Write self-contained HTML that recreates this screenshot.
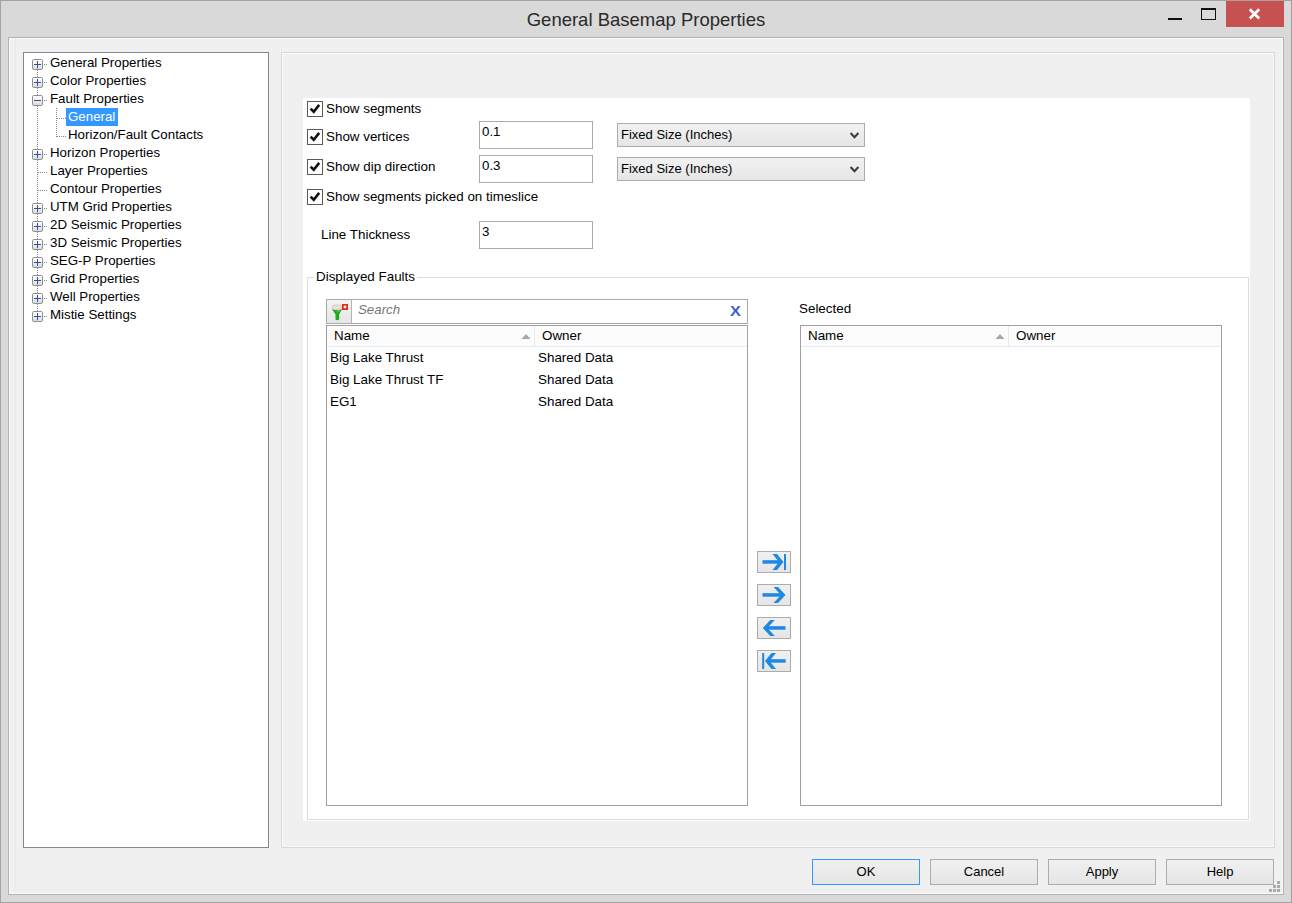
<!DOCTYPE html>
<html><head><meta charset="utf-8">
<style>
*{box-sizing:border-box;margin:0;padding:0}
html,body{width:1292px;height:903px;overflow:hidden;background:#d9d9d9}
body{position:relative;font-family:"Liberation Sans",sans-serif;color:#000}
.a{position:absolute}
.t{position:absolute;white-space:pre;line-height:1}
#frame{left:0;top:0;width:1292px;height:903px;border:1px solid #a3a3a3;background:#d9d9d9}
#title{left:0;top:11px;width:1292px;text-align:center;font-size:18.5px;color:#2a2a2a}
#close{left:1226px;top:1px;width:58px;height:26px;background:#c75050}
#client{left:8px;top:37px;width:1276px;height:858px;border:1px solid #b2b2b2;background:#f0f0f0;box-shadow:inset 1px 1px 0 #fafafa,inset -1px -1px 0 #fafafa}
#tree{left:23px;top:52px;width:246px;height:796px;border:1px solid #828790;background:#fff}
#rpanel{left:281px;top:52px;width:994px;height:796px;border:1px solid #d7d7d7;background:#f0f0f0;box-shadow:inset 1px 1px 0 #fbfbfb,inset -1px -1px 0 #f6f6f6}
#white{left:303px;top:98px;width:947px;height:723px;background:#fff}
.cb{position:absolute;width:16px;height:16px;border:1px solid #5a5a5a;background:#fff}
.lbl{font-size:13.4px}
.inp{position:absolute;width:114px;height:28px;border:1px solid #ababab;background:#fff}
.sel{position:absolute;width:248px;height:24px;border:1px solid #acacac;background:linear-gradient(#f2f2f2,#e5e5e5)}
.btn{position:absolute;width:108px;height:26px;border:1px solid #acacac;background:linear-gradient(#f0f0f0,#e5e5e5);font-size:13px;text-align:center;line-height:23px}
.abtn{position:absolute;left:757px;width:34px;height:22px;border:1px solid #acacac;background:linear-gradient(#f0f0f0,#e5e5e5)}
.list{position:absolute;border:1px solid #a0a0a0;background:#fff}
.row{font-size:13.4px}
.tr{font-size:13.3px}
</style></head><body>
<div id="frame" class="a"></div>
<div id="title" class="t">General Basemap Properties</div>
<div id="close" class="a"></div>
<div class="a" style="left:1168px;top:18px;width:14px;height:2px;background:#111"></div>
<div class="a" style="left:1201px;top:8px;width:15px;height:12px;border:1px solid #111;border-top-width:2px"></div>
<svg class="a" style="left:1226px;top:1px" width="58" height="26"><path d="M23.8 8.2 L33.2 17.4 M33.2 8.2 L23.8 17.4" stroke="#fff" stroke-width="2.8"/></svg>
<div id="client" class="a"></div>
<div class="a" style="left:15px;top:38px;width:1px;height:852px;background:#e9e9e9"></div>
<div class="a" style="left:15px;top:889px;width:1268px;height:1px;background:#e9e9e9"></div>
<div class="a" style="left:299px;top:53px;width:1px;height:770px;background:#ebebeb"></div>
<div id="tree" class="a"></div>
<div id="rpanel" class="a"></div>
<div id="white" class="a"></div>
<!-- tree -->
<svg class="a" style="left:0;top:0" width="280" height="340" shape-rendering="crispEdges">
<defs><linearGradient id="eg" x1="0" y1="0" x2="0" y2="1"><stop offset="0" stop-color="#ffffff"/><stop offset="0.5" stop-color="#f0f0f0"/><stop offset="1" stop-color="#d6d6d6"/></linearGradient></defs>
<line x1="37.5" y1="64" x2="37.5" y2="316" stroke="#8a8a8a" stroke-dasharray="1 1"/>
<line x1="56.5" y1="108" x2="56.5" y2="137" stroke="#8a8a8a" stroke-dasharray="1 1"/>
<line x1="38" y1="64.5" x2="48" y2="64.5" stroke="#8a8a8a" stroke-dasharray="1 1"/>
<rect x="32.5" y="59.5" width="10" height="10" rx="1.2" fill="url(#eg)" stroke="#8f8f8f" shape-rendering="geometricPrecision"/>
<rect x="34" y="64" width="7" height="1" fill="#2f4f9f"/>
<rect x="37" y="61" width="1" height="7" fill="#2f4f9f"/>
<line x1="38" y1="82.5" x2="48" y2="82.5" stroke="#8a8a8a" stroke-dasharray="1 1"/>
<rect x="32.5" y="77.5" width="10" height="10" rx="1.2" fill="url(#eg)" stroke="#8f8f8f" shape-rendering="geometricPrecision"/>
<rect x="34" y="82" width="7" height="1" fill="#2f4f9f"/>
<rect x="37" y="79" width="1" height="7" fill="#2f4f9f"/>
<line x1="38" y1="100.5" x2="48" y2="100.5" stroke="#8a8a8a" stroke-dasharray="1 1"/>
<rect x="32.5" y="95.5" width="10" height="10" rx="1.2" fill="url(#eg)" stroke="#8f8f8f" shape-rendering="geometricPrecision"/>
<rect x="34" y="100" width="7" height="1" fill="#2f4f9f"/>
<line x1="57" y1="118.5" x2="66" y2="118.5" stroke="#8a8a8a" stroke-dasharray="1 1"/>
<rect x="66" y="108" width="52" height="18" fill="#3399ff"/>
<line x1="57" y1="136.5" x2="66" y2="136.5" stroke="#8a8a8a" stroke-dasharray="1 1"/>
<line x1="38" y1="154.5" x2="48" y2="154.5" stroke="#8a8a8a" stroke-dasharray="1 1"/>
<rect x="32.5" y="149.5" width="10" height="10" rx="1.2" fill="url(#eg)" stroke="#8f8f8f" shape-rendering="geometricPrecision"/>
<rect x="34" y="154" width="7" height="1" fill="#2f4f9f"/>
<rect x="37" y="151" width="1" height="7" fill="#2f4f9f"/>
<line x1="38" y1="172.5" x2="48" y2="172.5" stroke="#8a8a8a" stroke-dasharray="1 1"/>
<line x1="38" y1="190.5" x2="48" y2="190.5" stroke="#8a8a8a" stroke-dasharray="1 1"/>
<line x1="38" y1="208.5" x2="48" y2="208.5" stroke="#8a8a8a" stroke-dasharray="1 1"/>
<rect x="32.5" y="203.5" width="10" height="10" rx="1.2" fill="url(#eg)" stroke="#8f8f8f" shape-rendering="geometricPrecision"/>
<rect x="34" y="208" width="7" height="1" fill="#2f4f9f"/>
<rect x="37" y="205" width="1" height="7" fill="#2f4f9f"/>
<line x1="38" y1="226.5" x2="48" y2="226.5" stroke="#8a8a8a" stroke-dasharray="1 1"/>
<rect x="32.5" y="221.5" width="10" height="10" rx="1.2" fill="url(#eg)" stroke="#8f8f8f" shape-rendering="geometricPrecision"/>
<rect x="34" y="226" width="7" height="1" fill="#2f4f9f"/>
<rect x="37" y="223" width="1" height="7" fill="#2f4f9f"/>
<line x1="38" y1="244.5" x2="48" y2="244.5" stroke="#8a8a8a" stroke-dasharray="1 1"/>
<rect x="32.5" y="239.5" width="10" height="10" rx="1.2" fill="url(#eg)" stroke="#8f8f8f" shape-rendering="geometricPrecision"/>
<rect x="34" y="244" width="7" height="1" fill="#2f4f9f"/>
<rect x="37" y="241" width="1" height="7" fill="#2f4f9f"/>
<line x1="38" y1="262.5" x2="48" y2="262.5" stroke="#8a8a8a" stroke-dasharray="1 1"/>
<rect x="32.5" y="257.5" width="10" height="10" rx="1.2" fill="url(#eg)" stroke="#8f8f8f" shape-rendering="geometricPrecision"/>
<rect x="34" y="262" width="7" height="1" fill="#2f4f9f"/>
<rect x="37" y="259" width="1" height="7" fill="#2f4f9f"/>
<line x1="38" y1="280.5" x2="48" y2="280.5" stroke="#8a8a8a" stroke-dasharray="1 1"/>
<rect x="32.5" y="275.5" width="10" height="10" rx="1.2" fill="url(#eg)" stroke="#8f8f8f" shape-rendering="geometricPrecision"/>
<rect x="34" y="280" width="7" height="1" fill="#2f4f9f"/>
<rect x="37" y="277" width="1" height="7" fill="#2f4f9f"/>
<line x1="38" y1="298.5" x2="48" y2="298.5" stroke="#8a8a8a" stroke-dasharray="1 1"/>
<rect x="32.5" y="293.5" width="10" height="10" rx="1.2" fill="url(#eg)" stroke="#8f8f8f" shape-rendering="geometricPrecision"/>
<rect x="34" y="298" width="7" height="1" fill="#2f4f9f"/>
<rect x="37" y="295" width="1" height="7" fill="#2f4f9f"/>
<line x1="38" y1="316.5" x2="48" y2="316.5" stroke="#8a8a8a" stroke-dasharray="1 1"/>
<rect x="32.5" y="311.5" width="10" height="10" rx="1.2" fill="url(#eg)" stroke="#8f8f8f" shape-rendering="geometricPrecision"/>
<rect x="34" y="316" width="7" height="1" fill="#2f4f9f"/>
<rect x="37" y="313" width="1" height="7" fill="#2f4f9f"/>
</svg>
<div class="t tr" style="left:50px;top:56px">General Properties</div>
<div class="t tr" style="left:50px;top:74px">Color Properties</div>
<div class="t tr" style="left:50px;top:92px">Fault Properties</div>
<div class="t tr" style="left:68px;top:110px;color:#fff">General</div>
<div class="t tr" style="left:68px;top:128px">Horizon/Fault Contacts</div>
<div class="t tr" style="left:50px;top:146px">Horizon Properties</div>
<div class="t tr" style="left:50px;top:164px">Layer Properties</div>
<div class="t tr" style="left:50px;top:182px">Contour Properties</div>
<div class="t tr" style="left:50px;top:200px">UTM Grid Properties</div>
<div class="t tr" style="left:50px;top:218px">2D Seismic Properties</div>
<div class="t tr" style="left:50px;top:236px">3D Seismic Properties</div>
<div class="t tr" style="left:50px;top:254px">SEG-P Properties</div>
<div class="t tr" style="left:50px;top:272px">Grid Properties</div>
<div class="t tr" style="left:50px;top:290px">Well Properties</div>
<div class="t tr" style="left:50px;top:308px">Mistie Settings</div>

<!-- checkboxes -->
<div class="cb" style="left:307px;top:101px"><svg width="16" height="16" style="position:absolute;left:-1px;top:-1px"><path d="M3.6 7.6 L6.7 10.7 L12.2 3.9" fill="none" stroke="#111" stroke-width="2.6"/></svg></div>
<div class="t lbl" style="left:326px;top:102px">Show segments</div>
<div class="cb" style="left:307px;top:129px"><svg width="16" height="16" style="position:absolute;left:-1px;top:-1px"><path d="M3.6 7.6 L6.7 10.7 L12.2 3.9" fill="none" stroke="#111" stroke-width="2.6"/></svg></div>
<div class="t lbl" style="left:326px;top:130px">Show vertices</div>
<div class="cb" style="left:307px;top:159px"><svg width="16" height="16" style="position:absolute;left:-1px;top:-1px"><path d="M3.6 7.6 L6.7 10.7 L12.2 3.9" fill="none" stroke="#111" stroke-width="2.6"/></svg></div>
<div class="t lbl" style="left:326px;top:160px">Show dip direction</div>
<div class="cb" style="left:307px;top:189px"><svg width="16" height="16" style="position:absolute;left:-1px;top:-1px"><path d="M3.6 7.6 L6.7 10.7 L12.2 3.9" fill="none" stroke="#111" stroke-width="2.6"/></svg></div>
<div class="t lbl" style="left:326px;top:190px">Show segments picked on timeslice</div>
<div class="t lbl" style="left:321px;top:228px">Line Thickness</div>

<div class="inp" style="left:479px;top:121px"></div>
<div class="t tr" style="left:482px;top:125px">0.1</div>
<div class="inp" style="left:479px;top:155px"></div>
<div class="t tr" style="left:482px;top:159px">0.3</div>
<div class="inp" style="left:479px;top:221px"></div>
<div class="t tr" style="left:482px;top:225px">3</div>
<div class="sel" style="left:617px;top:123px"><svg width="12" height="10" style="position:absolute;left:231px;top:6px"><path d="M1.6 3 L5.5 7.2 L9.4 3" fill="none" stroke="#3c3c3c" stroke-width="2.1"/></svg></div>
<div class="t" style="left:621px;top:128px;font-size:13px">Fixed Size (Inches)</div>
<div class="sel" style="left:617px;top:157px"><svg width="12" height="10" style="position:absolute;left:231px;top:6px"><path d="M1.6 3 L5.5 7.2 L9.4 3" fill="none" stroke="#3c3c3c" stroke-width="2.1"/></svg></div>
<div class="t" style="left:621px;top:162px;font-size:13px">Fixed Size (Inches)</div>

<!-- group box -->
<div class="a" style="left:307px;top:277px;width:942px;height:543px;border:1px solid #dcdcdc"></div>
<div class="t lbl" style="left:314px;top:270px;background:#fff;padding:0 2px">Displayed Faults</div>
<!-- search -->
<div class="a" style="left:326px;top:299px;width:422px;height:25px;border:1px solid #a9a9a9;background:#fff"></div>
<div class="a" style="left:327px;top:300px;width:25px;height:23px;background:linear-gradient(#f4f4f4,#e6e6e6);border-right:1px solid #b4b4b4"></div>
<svg class="a" style="left:326px;top:299px" width="26" height="25">
<ellipse cx="10.8" cy="8.2" rx="4.6" ry="2.2" fill="#d8eed8" stroke="#f2a0a0" stroke-width="0.7"/>
<path d="M5.8 10 Q11 12.6 16.2 10 L13.2 15.2 L13.2 20.5 Q11.3 22 9.5 20.5 L9.5 15.2 Z" fill="#20a820"/>
<path d="M11.5 13 L13.5 11.5" stroke="#9ad89a" stroke-width="1"/>
<rect x="16" y="5" width="6" height="6" fill="#e62a18"/>
<circle cx="19" cy="8" r="1.4" fill="#fff"/>
</svg>
<div class="t" style="left:358px;top:303px;font-size:13.3px;font-style:italic;color:#777">Search</div>
<div class="t" style="left:730px;top:304px;font-size:14.5px;font-weight:bold;color:#3a5fd8;transform:scaleX(1.12);transform-origin:0 0">X</div>
<div class="list" style="left:326px;top:325px;width:422px;height:481px"></div>
<div class="a" style="left:327px;top:326px;width:420px;height:21px;background:#fcfcfc;border-bottom:1px solid #e3ebf6"></div>
<div class="a" style="left:534px;top:326px;width:1px;height:20px;background:#e8eaee"></div>
<svg class="a" style="left:521px;top:333px" width="11" height="7"><path d="M0.5 6 L5 1 L9.5 6 Z" fill="#a8a8a8"/></svg>
<div class="t row" style="left:334px;top:329px">Name</div>
<div class="t row" style="left:542px;top:329px">Owner</div>
<div class="t row" style="left:330px;top:351px">Big Lake Thrust</div>
<div class="t row" style="left:538px;top:351px">Shared Data</div>
<div class="t row" style="left:330px;top:373px">Big Lake Thrust TF</div>
<div class="t row" style="left:538px;top:373px">Shared Data</div>
<div class="t row" style="left:330px;top:395px">EG1</div>
<div class="t row" style="left:538px;top:395px">Shared Data</div>
<div class="t row" style="left:799px;top:302px">Selected</div>
<div class="list" style="left:800px;top:325px;width:422px;height:481px"></div>
<div class="a" style="left:801px;top:326px;width:420px;height:21px;background:#fcfcfc;border-bottom:1px solid #e3ebf6"></div>
<div class="a" style="left:1008px;top:326px;width:1px;height:20px;background:#e8eaee"></div>
<svg class="a" style="left:995px;top:333px" width="11" height="7"><path d="M0.5 6 L5 1 L9.5 6 Z" fill="#a8a8a8"/></svg>
<div class="t row" style="left:808px;top:329px">Name</div>
<div class="t row" style="left:1016px;top:329px">Owner</div>

<div class="abtn" style="top:551px"><svg width="34" height="22" style="position:absolute;left:-1px;top:-1px"><rect x="5.5" y="9.2" width="19" height="3.5" fill="#1e88e5"/><path d="M15.5 3 L20 3 L26.5 11 L20 19 L15.5 19 L22 11 Z" fill="#1e88e5"/><rect x="27" y="3" width="2" height="16" fill="#1e88e5"/></svg></div>
<div class="abtn" style="top:584px"><svg width="34" height="22" style="position:absolute;left:-1px;top:-1px"><rect x="5.5" y="9.2" width="20" height="3.5" fill="#1e88e5"/><path d="M16.5 3 L21 3 L28.5 11 L21 19 L16.5 19 L24 11 Z" fill="#1e88e5"/></svg></div>
<div class="abtn" style="top:617px"><svg width="34" height="22" style="position:absolute;left:-1px;top:-1px"><rect x="9" y="9.2" width="19.5" height="3.5" fill="#1e88e5"/><path d="M17.8 3 L13.3 3 L5.8 11 L13.3 19 L17.8 19 L10.3 11 Z" fill="#1e88e5"/></svg></div>
<div class="abtn" style="top:650px"><svg width="34" height="22" style="position:absolute;left:-1px;top:-1px"><rect x="11" y="9.2" width="17.7" height="3.5" fill="#1e88e5"/><path d="M19 3 L14.5 3 L8 11 L14.5 19 L19 19 L12.5 11 Z" fill="#1e88e5"/><rect x="5.2" y="3" width="2" height="16" fill="#1e88e5"/></svg></div>

<div class="btn" style="left:812px;top:859px;border-color:#3399ff">OK</div>
<div class="btn" style="left:930px;top:859px">Cancel</div>
<div class="btn" style="left:1048px;top:859px">Apply</div>
<div class="btn" style="left:1166px;top:859px">Help</div>
<svg class="a" style="left:1266px;top:878px" width="16" height="16" shape-rendering="crispEdges"><rect x="11" y="3" width="3" height="3" fill="#ababab"/><rect x="7" y="7" width="3" height="3" fill="#ababab"/><rect x="11" y="7" width="3" height="3" fill="#ababab"/><rect x="3" y="11" width="3" height="3" fill="#ababab"/><rect x="7" y="11" width="3" height="3" fill="#ababab"/><rect x="11" y="11" width="3" height="3" fill="#ababab"/></svg>
</body></html>
